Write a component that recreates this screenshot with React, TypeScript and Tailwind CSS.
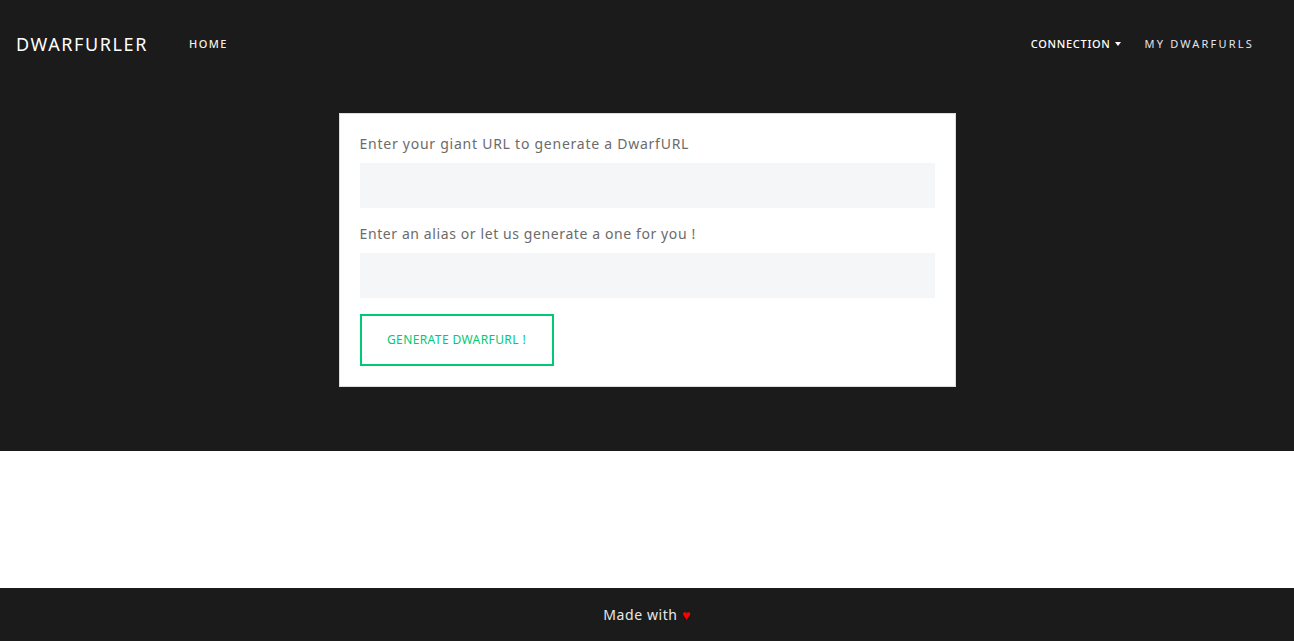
import React, { useState } from 'react';

const App: React.FC = () => {
  const [url, setUrl] = useState('');
  const [alias, setAlias] = useState('');

  return (
    <div className="min-h-screen flex flex-col bg-white" style={{ fontFamily: '"Noto Sans", "Open Sans", sans-serif' }}>
      {/* Hero / header zone */}
      <div className="bg-[#1b1b1b] h-[451px] flex flex-col">
        <nav className="h-[88px] flex items-center justify-between pl-4 pr-10">
          <div className="flex items-center">
            <span className="text-[18px] text-white tracking-[1.6px]">DWARFURLER</span>
            <a className="ml-[41px] text-[11px] font-medium tracking-[1.4px] text-[#f3f0e2]">HOME</a>
          </div>
          <div className="flex items-center gap-[24px]">
            <a className="flex items-center text-[11px] font-medium tracking-[0.7px] text-white">
              CONNECTION
              <span className="ml-1 w-0 h-0 border-l-[3px] border-r-[3px] border-t-[4px] border-l-transparent border-r-transparent border-t-white" />
            </a>
            <a className="text-[11px] tracking-[2.2px] text-[#e3e6f0]">MY DWARFURLS</a>
          </div>
        </nav>

        <div className="flex justify-center pt-[25px]">
          <form
            className="w-[617px] bg-white border border-[#dcdcdc] px-5 pt-[20px] pb-[20px]"
            onSubmit={(e) => e.preventDefault()}
          >
            <label className="block text-[14px] text-[#6b6b6b] tracking-[0.75px] leading-[20px] mb-[9px]">
              Enter your giant URL to generate a DwarfURL
            </label>
            <input
              type="text"
              value={url}
              onChange={(e) => setUrl(e.target.value)}
              className="block w-full h-[45px] bg-[#f5f6f8] outline-none px-3 text-sm"
            />
            <label className="block text-[14px] text-[#6b6b6b] tracking-[0.6px] leading-[20px] mt-[16px] mb-[9px]">
              Enter an alias or let us generate a one for you !
            </label>
            <input
              type="text"
              value={alias}
              onChange={(e) => setAlias(e.target.value)}
              className="block w-full h-[45px] bg-[#f5f6f8] outline-none px-3 text-sm"
            />
            <button
              type="submit"
              className="mt-[16px] w-[194px] h-[52px] border-2 border-[#00c974] text-[#00c974] text-[12px] tracking-[0.4px]"
            >
              GENERATE DWARFURL !
            </button>
          </form>
        </div>
      </div>

      <div className="h-[137px] bg-white" />

      <footer className="bg-[#1b1b1b] h-[53px] flex items-center justify-center">
        <span className="text-[14px] text-[#e8e8e8] tracking-[0.6px]">
          Made with <span className="text-[#ff0000]">♥</span>
        </span>
      </footer>
    </div>
  );
};

export default App;
